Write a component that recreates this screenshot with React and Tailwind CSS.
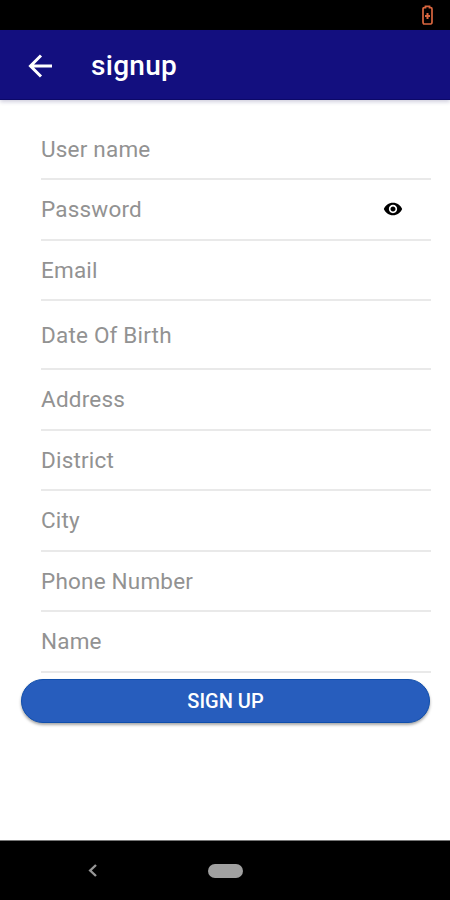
const fields = [
  { label: 'User name', row: 'h-[61px] pt-px' },
  { label: 'Password', row: 'h-[61px]', secret: true },
  { label: 'Email', row: 'h-[60px] pt-px' },
  { label: 'Date Of Birth', row: 'h-[69px] pt-px' },
  { label: 'Address', row: 'h-[61px]' },
  { label: 'District', row: 'h-[60px] pt-px' },
  { label: 'City', row: 'h-[61px]' },
  { label: 'Phone Number', row: 'h-[60px] pt-px' },
  { label: 'Name', row: 'h-[61px]' },
]

function EyeIcon() {
  return (
    <svg className="w-5 h-5 mr-[28.5px] mb-px text-black" viewBox="0 0 24 24" fill="currentColor">
      <path d="M12 4.5C7 4.5 2.73 7.61 1 12c1.73 4.39 6 7.5 11 7.5s9.27-3.11 11-7.5c-1.73-4.39-6-7.5-11-7.5zM12 17c-2.76 0-5-2.24-5-5s2.24-5 5-5 5 2.24 5 5-2.24 5-5 5zm0-8c-1.66 0-3 1.34-3 3s1.34 3 3 3 3-1.34 3-3-1.34-3-3-3z" />
    </svg>
  )
}

export default function App() {
  return (
    <div
      className="w-[450px] h-[900px] flex flex-col bg-white overflow-hidden font-['Roboto',sans-serif]"
    >
      {/* Status bar */}
      <div className="h-[30px] shrink-0 bg-black flex justify-end pr-[17px] pt-[5px]">
        <svg className="w-[11px] h-5" viewBox="0 0 11 20" fill="none" stroke="#d9663f" strokeWidth="1.7">
          <path d="M3.5 2.6V1.4h4v1.2h1.2q1.3 0 1.3 1.3v13.2q0 1.9-1.3 1.9H2.3q-1.3 0-1.3-1.9V3.9q0-1.3 1.3-1.3z" />
          <path d="M5.5 8v6M3 11h5" strokeWidth="2" />
        </svg>
      </div>

      {/* App bar */}
      <header className="h-[70px] shrink-0 flex items-center bg-[#130f7f] border-b border-[#0c0868] shadow-[0_2px_4px_rgba(20,15,90,0.2)]">
        <svg
          className="w-6 h-6 mt-[2px] ml-[28px] text-white"
          viewBox="0 0 24 24"
          fill="none"
          stroke="currentColor"
          strokeWidth="3"
        >
          <path d="M24 12H3M13 1.5 2.5 12 13 22.5" />
        </svg>
        <h1 className="mt-[2px] ml-[39px] text-[28px] leading-8 tracking-[0.3px] font-medium text-white">signup</h1>
      </header>

      <main className="flex-1 pt-[19px]">
        <form>
          {fields.map(({ label, row, secret }) => (
            <div
              key={label}
              className={`${row} ml-[41px] mr-[19px] flex items-center justify-between border-b-2 border-[#e9e9e9]`}
            >
              <span className="text-[22.5px] leading-none tracking-[0.2px] text-[#929292]">{label}</span>
              {secret && <EyeIcon />}
            </div>
          ))}
          <button
            type="button"
            className="block w-[409px] h-[44px] mt-[6px] ml-[21px] rounded-full bg-[#275dbd] border border-[#104fac] text-[20px] font-medium text-white shadow-[0_2px_3px_rgba(0,0,0,0.35)]"
          >
            SIGN UP
          </button>
        </form>
      </main>

      {/* Navigation bar */}
      <nav className="h-[60px] shrink-0 flex items-center bg-black border-t border-[#777]">
        <svg className="w-[9px] h-[13px] ml-[88px]" viewBox="0 0 9 13" fill="none" stroke="#979797" strokeWidth="2.4">
          <path d="M8 1 2.2 6.5 8 12" />
        </svg>
        <div className="w-[35px] h-[14px] ml-[111px] rounded-full bg-[#a0a0a0]" />
      </nav>
    </div>
  )
}
